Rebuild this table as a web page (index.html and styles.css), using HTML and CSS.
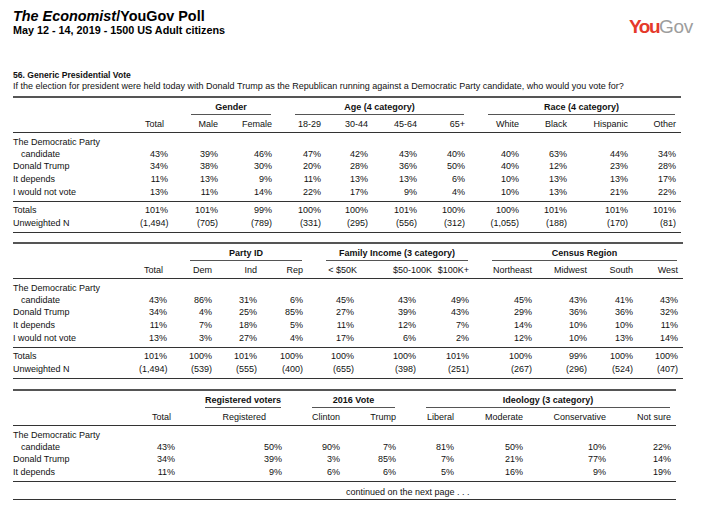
FILE: index.html
```html
<!DOCTYPE html>
<html lang="en">
<head>
<meta charset="utf-8">
<title>The Economist/YouGov Poll</title>
<link rel="stylesheet" href="styles.css">
</head>
<body>
<div class="page">
  <header class="top">
    <div class="titles">
      <h1 class="title"><i>The Economist</i>/YouGov Poll</h1>
      <p class="subtitle">May 12 - 14, 2019 - 1500 US Adult citizens</p>
    </div>
    <div class="logo"><span class="you">You</span><span class="gov">Gov</span></div>
  </header>

  <section class="question">
    <h2 class="qnum">56. Generic Presidential Vote</h2>
    <p class="qtext">If the election for president were held today with Donald Trump as the Republican running against a Democratic Party candidate, who would you vote for?</p>
  </section>

  <div class="xtab t1">
    <div class="row grp-row">
      <div class="span2"></div>
      <div class="grp span2">Gender</div>
      <div class="grp span4">Age (4 category)</div>
      <div class="grp span4">Race (4 category)</div>
    </div>
    <div class="row hdr-row">
      <div></div>
      <div class="th-total">Total</div>
      <div>Male</div><div>Female</div>
      <div>18-29</div><div>30-44</div><div>45-64</div><div>65+</div>
      <div>White</div><div>Black</div><div>Hispanic</div><div>Other</div>
    </div>
    <div class="block">
      <div class="row two"><div class="label">The Democratic Party<span class="indent">candidate</span></div><div>43%</div><div>39%</div><div>46%</div><div>47%</div><div>42%</div><div>43%</div><div>40%</div><div>40%</div><div>63%</div><div>44%</div><div>34%</div></div>
      <div class="row"><div class="label">Donald Trump</div><div>34%</div><div>38%</div><div>30%</div><div>20%</div><div>28%</div><div>36%</div><div>50%</div><div>40%</div><div>12%</div><div>23%</div><div>28%</div></div>
      <div class="row"><div class="label">It depends</div><div>11%</div><div>13%</div><div>9%</div><div>11%</div><div>13%</div><div>13%</div><div>6%</div><div>10%</div><div>13%</div><div>13%</div><div>17%</div></div>
      <div class="row"><div class="label">I would not vote</div><div>13%</div><div>11%</div><div>14%</div><div>22%</div><div>17%</div><div>9%</div><div>4%</div><div>10%</div><div>13%</div><div>21%</div><div>22%</div></div>
    </div>
    <div class="totals">
      <div class="row"><div class="label">Totals</div><div>101%</div><div>101%</div><div>99%</div><div>100%</div><div>100%</div><div>101%</div><div>100%</div><div>100%</div><div>101%</div><div>101%</div><div>101%</div></div>
      <div class="row"><div class="label">Unweighted N</div><div>(1,494)</div><div>(705)</div><div>(789)</div><div>(331)</div><div>(295)</div><div>(556)</div><div>(312)</div><div>(1,055)</div><div>(188)</div><div>(170)</div><div>(81)</div></div>
    </div>
  </div>

  <div class="xtab t2">
    <div class="row grp-row">
      <div class="span2"></div>
      <div class="grp span3">Party ID</div>
      <div class="grp span3">Family Income (3 category)</div>
      <div class="grp span4">Census Region</div>
    </div>
    <div class="row hdr-row">
      <div></div>
      <div class="th-total">Total</div>
      <div>Dem</div><div>Ind</div><div>Rep</div>
      <div class="out3">&lt; $50K</div><div class="out16">$50-100K</div><div>$100K+</div>
      <div>Northeast</div><div>Midwest</div><div>South</div><div>West</div>
    </div>
    <div class="block">
      <div class="row two"><div class="label">The Democratic Party<span class="indent">candidate</span></div><div>43%</div><div>86%</div><div>31%</div><div>6%</div><div>45%</div><div>43%</div><div>49%</div><div>45%</div><div>43%</div><div>41%</div><div>43%</div></div>
      <div class="row"><div class="label">Donald Trump</div><div>34%</div><div>4%</div><div>25%</div><div>85%</div><div>27%</div><div>39%</div><div>43%</div><div>29%</div><div>36%</div><div>36%</div><div>32%</div></div>
      <div class="row"><div class="label">It depends</div><div>11%</div><div>7%</div><div>18%</div><div>5%</div><div>11%</div><div>12%</div><div>7%</div><div>14%</div><div>10%</div><div>10%</div><div>11%</div></div>
      <div class="row"><div class="label">I would not vote</div><div>13%</div><div>3%</div><div>27%</div><div>4%</div><div>17%</div><div>6%</div><div>2%</div><div>12%</div><div>10%</div><div>13%</div><div>14%</div></div>
    </div>
    <div class="totals">
      <div class="row"><div class="label">Totals</div><div>101%</div><div>100%</div><div>101%</div><div>100%</div><div>100%</div><div>100%</div><div>101%</div><div>100%</div><div>99%</div><div>100%</div><div>100%</div></div>
      <div class="row"><div class="label">Unweighted N</div><div>(1,494)</div><div>(539)</div><div>(555)</div><div>(400)</div><div>(655)</div><div>(398)</div><div>(251)</div><div>(267)</div><div>(296)</div><div>(524)</div><div>(407)</div></div>
    </div>
  </div>

  <div class="xtab t3">
    <div class="row grp-row">
      <div class="span2"></div>
      <div class="grp">Registered voters</div>
      <div class="grp span2">2016 Vote</div>
      <div class="grp span4">Ideology (3 category)</div>
    </div>
    <div class="row hdr-row">
      <div></div>
      <div class="th-total">Total</div>
      <div class="in16">Registered</div>
      <div>Clinton</div><div>Trump</div>
      <div>Liberal</div><div>Moderate</div><div>Conservative</div><div>Not sure</div>
    </div>
    <div class="block">
      <div class="row two"><div class="label">The Democratic Party<span class="indent">candidate</span></div><div>43%</div><div>50%</div><div>90%</div><div>7%</div><div>81%</div><div>50%</div><div>10%</div><div>22%</div></div>
      <div class="row"><div class="label">Donald Trump</div><div>34%</div><div>39%</div><div>3%</div><div>85%</div><div>7%</div><div>21%</div><div>77%</div><div>14%</div></div>
      <div class="row"><div class="label">It depends</div><div>11%</div><div>9%</div><div>6%</div><div>6%</div><div>5%</div><div>16%</div><div>9%</div><div>19%</div></div>
    </div>
    <div class="row cont">
      <div class="span4"></div>
      <div class="note">continued on the next page . . .</div>
    </div>
  </div>
</div>
</body>
</html>
```

FILE: styles.css
```css
* {
  box-sizing: border-box;
  margin: 0;
  padding: 0;
}

body {
  background: #ffffff;
  color: #111111;
  font-family: "Liberation Sans", Arial, Helvetica, sans-serif;
}

.page {
  width: 702px;
  padding: 9px 0 0 13px;
}

/* ---------- header ---------- */
.top {
  display: flex;
  justify-content: space-between;
  align-items: flex-start;
  padding-right: 9px;
}

.title {
  font-size: 14.4px;
  line-height: 14px;
  font-weight: 700;
  color: #000;
}

.title i {
  font-style: italic;
}

.subtitle {
  margin-top: 1px;
  font-size: 10.8px;
  line-height: 12px;
  font-weight: 700;
  color: #000;
}

.logo {
  margin-top: 8px;
  font-size: 19px;
  line-height: 19px;
  white-space: nowrap;
}

.you {
  color: #e5392b;
  font-weight: 700;
  letter-spacing: -1.5px;
}

.gov {
  color: #9d9d9d;
  font-weight: 400;
  letter-spacing: -0.3px;
}

/* ---------- question ---------- */
.question {
  margin-top: 34px;
}

.qnum {
  font-size: 8.6px;
  line-height: 11px;
  font-weight: 700;
}

.qtext {
  font-size: 9px;
  line-height: 11px;
  white-space: nowrap;
}

/* ---------- cross tabs ---------- */
.xtab {
  border-top: 2px solid #555;
  font-size: 9px;
}

.t1 {
  width: 668px;
  margin-top: 4px;
}

.t2 {
  width: 670px;
  margin-top: 9px;
}

.t3 {
  width: 663px;
  margin-top: 10px;
}

.row {
  display: grid;
  line-height: 13px;
}

.row > div {
  text-align: right;
  white-space: nowrap;
}

.t1 .row {
  grid-template-columns: 127px 28px 50px 54px 49px 47px 49px 48px 54px 48px 61px 48px 5px;
}

.t2 .row {
  grid-template-columns: 126px 28px 45px 45px 46px 51px 62px 53px 63px 55px 46px 45px 5px;
}

.t3 .row {
  grid-template-columns: 134px 28px 107px 58px 56px 58px 69px 83px 65px 5px;
}

.span2 { grid-column: span 2; }
.span3 { grid-column: span 3; }
.span4 { grid-column: span 4; }

.row > .grp {
  margin-left: 23px;
  margin-right: 1px;
  padding: 3px 0 1px;
  line-height: 12px;
  border-bottom: 1px solid #555;
  text-align: center;
  font-weight: 700;
}

.t3 .row > .grp {
  margin-left: 30px;
}

.hdr-row {
  padding: 3px 0 2px;
  line-height: 12px;
  border-bottom: 1px solid #333;
}

.row > .th-total {
  padding-right: 4px;
}

.row > .out3 {
  margin-right: -3px;
}

.row > .out16 {
  margin-right: -16px;
}

.row > .in16 {
  padding-right: 16px;
}

.block {
  padding: 3px 0 2px;
  border-bottom: 1px solid #333;
}

.row.two {
  line-height: 12px;
}

.row.two > div {
  align-self: end;
}

.row > .label {
  text-align: left;
}

.indent {
  display: block;
  padding-left: 8px;
}

.totals {
  padding: 2px 0;
  border-bottom: 1px solid #333;
}

.cont {
  padding: 4px 0 1px;
  line-height: 12px;
  border-bottom: 1px solid #333;
}

.row > .note {
  grid-column: span 5;
  text-align: left;
  padding-left: 6px;
}
```
